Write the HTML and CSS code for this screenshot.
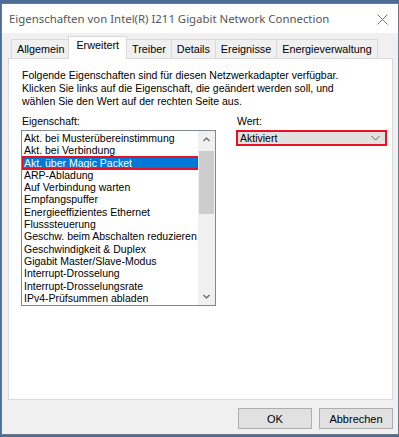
FILE: index.html
```html
<!DOCTYPE html>
<html lang="de">
<head>
    <meta charset="UTF-8">
    <title>Eigenschaften von Intel(R) I211 Gigabit Network Connection</title>
    <link rel="stylesheet" href="styles.css">
</head>
<body>
    <div class="window">
        <div class="titlebar">
            <span class="title">Eigenschaften von Intel(R) I211 Gigabit Network Connection</span>
            <svg class="close" width="11" height="11" viewBox="0 0 11 11">
                <path d="M0.5 0.5 L10.5 10.5 M10.5 0.5 L0.5 10.5" stroke="#777" stroke-width="1" fill="none"/>
            </svg>
        </div>

        <div class="dialog">
            <div class="tabs">
                <div class="tab">Allgemein</div>
                <div class="tab active">Erweitert</div>
                <div class="tab">Treiber</div>
                <div class="tab">Details</div>
                <div class="tab">Ereignisse</div>
                <div class="tab">Energieverwaltung</div>
            </div>

            <div class="panel">
                <p class="intro">Folgende Eigenschaften sind für diesen Netzwerkadapter verfügbar.<br>
                Klicken Sie links auf die Eigenschaft, die geändert werden soll, und<br>
                wählen Sie den Wert auf der rechten Seite aus.</p>

                <div class="columns">
                    <div class="col-left">
                        <div class="label">Eigenschaft:</div>
                        <div class="listbox">
                            <ul class="items">
                                <li>Akt. bei Musterübereinstimmung</li>
                                <li>Akt. bei Verbindung</li>
                                <li class="selected">Akt. über Magic Packet</li>
                                <li>ARP-Abladung</li>
                                <li>Auf Verbindung warten</li>
                                <li>Empfangspuffer</li>
                                <li>Energieeffizientes Ethernet</li>
                                <li>Flusssteuerung</li>
                                <li>Geschw. beim Abschalten reduzieren</li>
                                <li>Geschwindigkeit &amp; Duplex</li>
                                <li>Gigabit Master/Slave-Modus</li>
                                <li>Interrupt-Drosselung</li>
                                <li>Interrupt-Drosselungsrate</li>
                                <li>IPv4-Prüfsummen abladen</li>
                            </ul>
                            <div class="scrollbar">
                                <svg class="arrow" width="17" height="17" viewBox="0 0 17 17">
                                    <path d="M5.5 10 L8.5 7 L11.5 10" stroke="#606060" stroke-width="1.2" fill="none"/>
                                </svg>
                                <div class="track">
                                    <div class="thumb"></div>
                                </div>
                                <svg class="arrow" width="17" height="17" viewBox="0 0 17 17">
                                    <path d="M5.5 7 L8.5 10 L11.5 7" stroke="#606060" stroke-width="1.2" fill="none"/>
                                </svg>
                            </div>
                        </div>
                    </div>

                    <div class="col-right">
                        <div class="label">Wert:</div>
                        <div class="combo">
                            <span>Aktiviert</span>
                            <svg width="9" height="6" viewBox="0 0 9 6">
                                <path d="M0.5 1 L4.5 5 L8.5 1" stroke="#606060" stroke-width="1" fill="none"/>
                            </svg>
                        </div>
                    </div>
                </div>
            </div>

            <div class="buttons">
                <button class="btn">OK</button>
                <button class="btn">Abbrechen</button>
            </div>
        </div>
    </div>
</body>
</html>
```

FILE: styles.css
```css
/* basics */
* {
    margin: 0;
    padding: 0;
    box-sizing: border-box;
}

body {
    background: #4d6b95;
    font-family: 'Liberation Sans', Arial, sans-serif;
    font-size: 10.5px;
    color: #000;
    overflow: hidden;
}

/* window frame */
.window {
    margin: 3px 0 0 1px;
    width: 398px;
    height: 432px;
    border: 1px solid #6f7a88;
    background: #f0f0f0;
    display: flex;
    flex-direction: column;
}

.titlebar {
    height: 29px;
    background: #fff;
    display: flex;
    align-items: center;
    justify-content: space-between;
    padding: 0 10px 0 7px;
}

.title {
    font-family: 'Noto Sans', sans-serif;
    font-size: 11.4px;
    color: #555;
}

.close {
    margin-top: 1px;
}

/* dialog body */
.dialog {
    flex: 1;
    display: flex;
    flex-direction: column;
    padding: 3px 5px 0 6px;
}

.tabs {
    display: flex;
    align-items: flex-end;
    height: 22px;
    padding-left: 3px;
    font-size: 10.8px;
}

.tab {
    height: 19px;
    padding: 3px 5px 0 5px;
    border: 1px solid #d9d9d9;
    border-bottom: none;
    margin-right: -1px;
    background: #f0f0f0;
    white-space: nowrap;
}

.tab.active {
    background: #fff;
    position: relative;
    z-index: 2;
    margin: 0 -1px -1px -1px;
    padding: 2px 7px 0 7px;
    height: 23px;
}

.panel {
    height: 342px;
    background: #fff;
    border: 1px solid #d9d9d9;
    padding: 10px 4px 0 12px;
}

.intro {
    line-height: 13px;
    margin-left: 1px;
}

.columns {
    display: flex;
    margin-top: 7px;
}

.col-left {
    width: 195px;
    flex-shrink: 0;
}

.col-right {
    margin-left: 20px;
    width: 151px;
    flex-shrink: 0;
}

.label {
    height: 13px;
    line-height: 13px;
    margin: 0 0 2px 1px;
}

/* property list */
.listbox {
    width: 195px;
    height: 176px;
    border: 1px solid #828790;
    display: flex;
    background: #fff;
}

.items {
    list-style: none;
    flex: 1;
    overflow: hidden;
    padding-top: 1px;
}

.items li {
    height: 12.3px;
    line-height: 12.3px;
    padding-left: 2px;
    white-space: nowrap;
}

.items li.selected {
    background: #0078d7;
    color: #fff;
    outline: 2px solid #e81123;
    outline-offset: -1px;
}

.scrollbar {
    width: 17px;
    background: #f0f0f0;
    display: flex;
    flex-direction: column;
}

.track {
    flex: 1;
}

.thumb {
    height: 63px;
    margin: 3px 1px 0 1px;
    background: #cdcdcd;
}

/* value combo */
.combo {
    height: 16px;
    background: #e1e1e1;
    border: 2px solid #e81123;
    display: flex;
    align-items: center;
    justify-content: space-between;
    padding: 0 5px 0 2px;
}

/* bottom buttons */
.buttons {
    display: flex;
    justify-content: flex-end;
    gap: 7px;
    padding-top: 8px;
}

.btn {
    width: 74px;
    height: 21px;
    background: #e1e1e1;
    border: 1px solid #adadad;
    font-family: 'Liberation Sans', Arial, sans-serif;
    font-size: 11px;
    color: #000;
}
```
